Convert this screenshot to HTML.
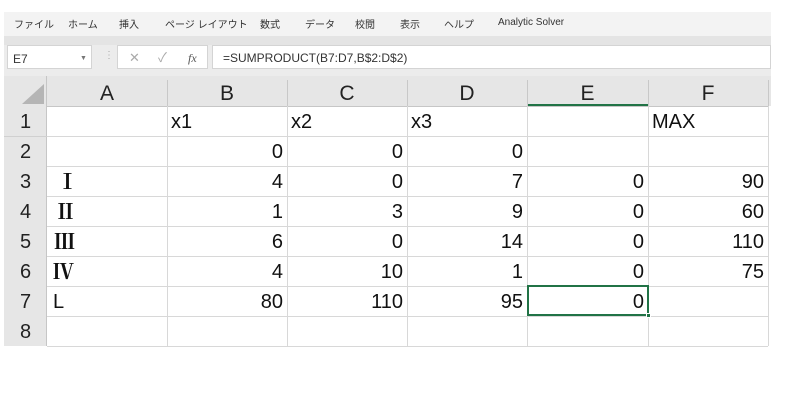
<!DOCTYPE html>
<html><head><meta charset="utf-8"><style>
*{margin:0;padding:0;box-sizing:border-box}
body{width:800px;height:405px;background:#fff;position:relative;overflow:hidden;font-family:"Liberation Sans","Noto Sans CJK JP",sans-serif;color:#222}
.a{position:absolute}
.tab{position:absolute;top:16px;font-size:10px;color:#333;white-space:nowrap}
.c{position:absolute;height:30px;line-height:32px;font-size:20px;color:#111;padding:0 4px}
.r{text-align:right}
.rn{font-family:"Noto Serif CJK SC","Liberation Serif",serif;font-weight:bold;font-size:21px;line-height:30px}
.hl{position:absolute;left:47px;width:721px;height:1px;background:#d8d8d8}
.vl{position:absolute;top:106px;height:240px;width:1px;background:#d8d8d8}
.ch{position:absolute;top:78px;height:28px;line-height:32px;font-size:21px;text-align:center;color:#222}
.rh{position:absolute;left:4px;width:43px;height:30px;line-height:32px;font-size:20px;text-align:center;color:#222}
</style></head><body>
<div class="a" style="left:4px;top:12px;width:767px;height:24px;background:#f3f3f3"></div>
<div class="a" style="left:4px;top:36px;width:767px;height:9px;background:#e4e4e4"></div>
<div class="tab" style="left:14px">ファイル</div>
<div class="tab" style="left:68px">ホーム</div>
<div class="tab" style="left:119px">挿入</div>
<div class="tab" style="left:165px">ページ レイアウト</div>
<div class="tab" style="left:260px">数式</div>
<div class="tab" style="left:305px">データ</div>
<div class="tab" style="left:355px">校閲</div>
<div class="tab" style="left:400px">表示</div>
<div class="tab" style="left:444px">ヘルプ</div>
<div class="tab" style="left:498px;top:17px">Analytic Solver</div>
<div class="a" style="left:4px;top:45px;width:767px;height:31px;background:#ececec"></div>
<div class="a" style="left:7px;top:45px;width:85px;height:24px;background:#fff;border:1px solid #d4d4d4;font-size:12px;line-height:26px;padding-left:5px;color:#333">E7<span style="position:absolute;left:72px;top:0;font-size:7px;color:#777">▼</span></div>
<div class="a" style="left:104px;top:50px;color:#aaa;font-size:10px">⋮</div>
<div class="a" style="left:117px;top:45px;width:91px;height:24px;background:#fff;border:1px solid #d4d4d4;font-size:13px;line-height:24px;color:#aaa"><span style="position:absolute;left:11px">✕</span><span style="position:absolute;left:40px">✓</span><span style="position:absolute;left:70px;color:#555;font-family:'Liberation Serif',serif;font-style:italic;font-size:12px">fx</span></div>
<div class="a" style="left:212px;top:45px;width:559px;height:24px;background:#fff;border:1px solid #d4d4d4;font-size:12px;line-height:24px;padding-left:10px;color:#333">=SUMPRODUCT(B7:D7,B$2:D$2)</div>
<div class="a" style="left:4px;top:76px;width:767px;height:30px;background:#e6e6e6"></div>
<div class="a" style="left:22px;top:84px;width:0;height:0;border-left:22px solid transparent;border-bottom:20px solid #b5b5b5"></div>
<div class="a" style="left:4px;top:106px;width:43px;height:240px;background:#e6e6e6"></div>
<div class="a" style="left:47px;top:106px;width:721px;height:1px;background:#c6c6c6"></div>
<div class="a" style="left:46px;top:76px;width:1px;height:270px;background:#c6c6c6"></div>
<div class="ch" style="left:47px;width:120px">A</div>
<div class="ch" style="left:167px;width:120px">B</div>
<div class="ch" style="left:287px;width:120px">C</div>
<div class="ch" style="left:407px;width:120px">D</div>
<div class="ch" style="left:527px;width:121px">E</div>
<div class="ch" style="left:648px;width:120px">F</div>
<div class="a" style="left:167px;top:80px;width:1px;height:26px;background:#c8c8c8"></div>
<div class="a" style="left:287px;top:80px;width:1px;height:26px;background:#c8c8c8"></div>
<div class="a" style="left:407px;top:80px;width:1px;height:26px;background:#c8c8c8"></div>
<div class="a" style="left:527px;top:80px;width:1px;height:26px;background:#c8c8c8"></div>
<div class="a" style="left:648px;top:80px;width:1px;height:26px;background:#c8c8c8"></div>
<div class="a" style="left:768px;top:80px;width:1px;height:26px;background:#c8c8c8"></div>
<div class="a" style="left:528px;top:104px;width:120px;height:2px;background:#217346"></div>
<div class="hl" style="top:136px"></div><div class="hl" style="top:166px"></div><div class="hl" style="top:196px"></div><div class="hl" style="top:226px"></div><div class="hl" style="top:256px"></div><div class="hl" style="top:286px"></div><div class="hl" style="top:316px"></div><div class="hl" style="top:346px"></div>
<div class="vl" style="left:167px"></div><div class="vl" style="left:287px"></div><div class="vl" style="left:407px"></div><div class="vl" style="left:527px"></div><div class="vl" style="left:648px"></div><div class="vl" style="left:768px"></div>
<div class="rh" style="top:106px">1</div><div class="rh" style="top:136px">2</div><div class="rh" style="top:166px">3</div><div class="rh" style="top:196px">4</div><div class="rh" style="top:226px">5</div><div class="rh" style="top:256px">6</div><div class="rh" style="top:286px">7</div><div class="rh" style="top:316px">8</div>
<div class="a" style="left:4px;top:136px;width:43px;height:1px;background:#d0d0d0"></div>
<div class="c" style="left:167px;top:106px">x1</div>
<div class="c" style="left:287px;top:106px">x2</div>
<div class="c" style="left:407px;top:106px">x3</div>
<div class="c" style="left:648px;top:106px">MAX</div>
<div class="c r" style="left:167px;width:120px;top:136px">0</div>
<div class="c r" style="left:287px;width:120px;top:136px">0</div>
<div class="c r" style="left:407px;width:120px;top:136px">0</div>
<div class="c rn" style="left:53px;top:166px">Ⅰ</div>
<div class="c rn" style="left:51px;top:196px">Ⅱ</div>
<div class="c rn" style="left:50px;top:226px">Ⅲ</div>
<div class="c rn" style="left:49px;top:256px">Ⅳ</div>
<div class="c" style="left:49px;top:286px">L</div>
<div class="c r" style="left:167px;width:120px;top:166px">4</div><div class="c r" style="left:287px;width:120px;top:166px">0</div><div class="c r" style="left:407px;width:120px;top:166px">7</div><div class="c r" style="left:527px;width:121px;top:166px">0</div><div class="c r" style="left:648px;width:120px;top:166px">90</div>
<div class="c r" style="left:167px;width:120px;top:196px">1</div><div class="c r" style="left:287px;width:120px;top:196px">3</div><div class="c r" style="left:407px;width:120px;top:196px">9</div><div class="c r" style="left:527px;width:121px;top:196px">0</div><div class="c r" style="left:648px;width:120px;top:196px">60</div>
<div class="c r" style="left:167px;width:120px;top:226px">6</div><div class="c r" style="left:287px;width:120px;top:226px">0</div><div class="c r" style="left:407px;width:120px;top:226px">14</div><div class="c r" style="left:527px;width:121px;top:226px">0</div><div class="c r" style="left:648px;width:120px;top:226px">110</div>
<div class="c r" style="left:167px;width:120px;top:256px">4</div><div class="c r" style="left:287px;width:120px;top:256px">10</div><div class="c r" style="left:407px;width:120px;top:256px">1</div><div class="c r" style="left:527px;width:121px;top:256px">0</div><div class="c r" style="left:648px;width:120px;top:256px">75</div>
<div class="c r" style="left:167px;width:120px;top:286px">80</div><div class="c r" style="left:287px;width:120px;top:286px">110</div><div class="c r" style="left:407px;width:120px;top:286px">95</div><div class="c r" style="left:527px;width:121px;top:286px">0</div>
<div class="a" style="left:527px;top:285px;width:122px;height:31px;border:2px solid #217346"></div>
<div class="a" style="left:646px;top:313px;width:5px;height:5px;background:#217346;border:1px solid #fff"></div>
</body></html>
